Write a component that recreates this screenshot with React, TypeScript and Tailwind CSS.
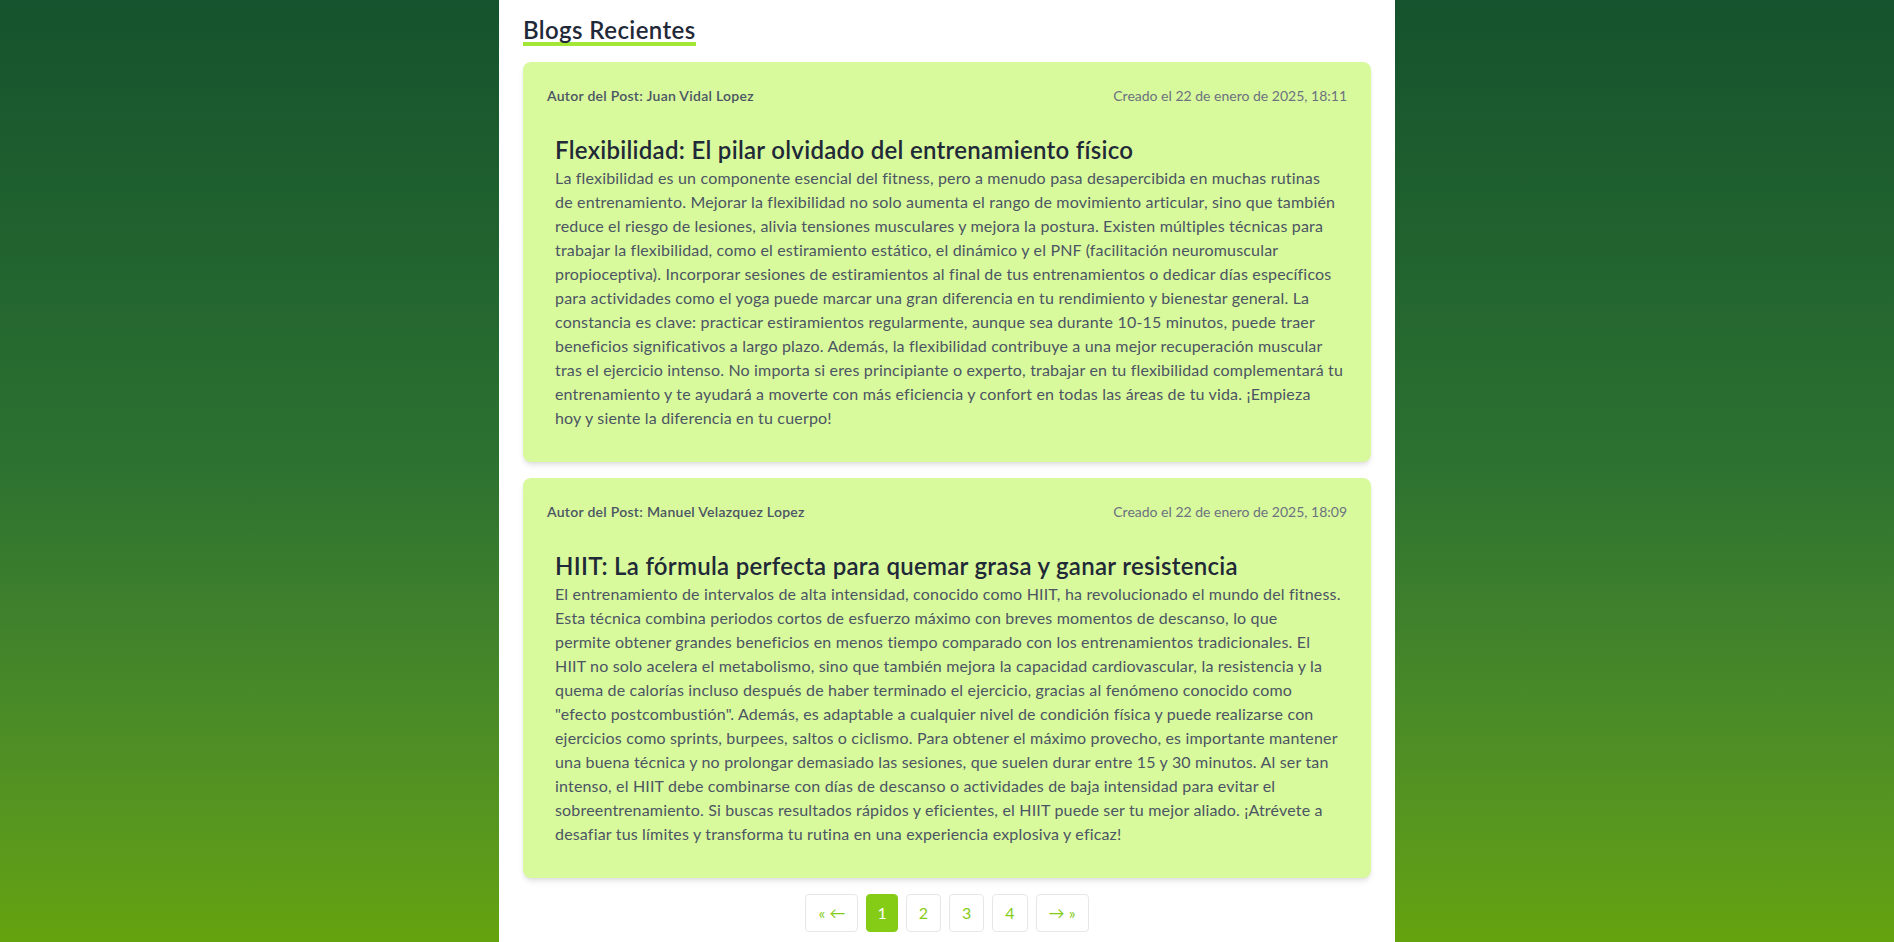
import React from "react";

type Post = {
  author: string;
  date: string;
  title: string;
  lines: string[];
};

const posts: Post[] = [
  {
    author: "Juan Vidal Lopez",
    date: "Creado el 22 de enero de 2025, 18:11",
    title: "Flexibilidad: El pilar olvidado del entrenamiento físico",
    lines: [
      "La flexibilidad es un componente esencial del fitness, pero a menudo pasa desapercibida en muchas rutinas",
      "de entrenamiento. Mejorar la flexibilidad no solo aumenta el rango de movimiento articular, sino que también",
      "reduce el riesgo de lesiones, alivia tensiones musculares y mejora la postura. Existen múltiples técnicas para",
      "trabajar la flexibilidad, como el estiramiento estático, el dinámico y el PNF (facilitación neuromuscular",
      "propioceptiva). Incorporar sesiones de estiramientos al final de tus entrenamientos o dedicar días específicos",
      "para actividades como el yoga puede marcar una gran diferencia en tu rendimiento y bienestar general. La",
      "constancia es clave: practicar estiramientos regularmente, aunque sea durante 10-15 minutos, puede traer",
      "beneficios significativos a largo plazo. Además, la flexibilidad contribuye a una mejor recuperación muscular",
      "tras el ejercicio intenso. No importa si eres principiante o experto, trabajar en tu flexibilidad complementará tu",
      "entrenamiento y te ayudará a moverte con más eficiencia y confort en todas las áreas de tu vida. ¡Empieza",
      "hoy y siente la diferencia en tu cuerpo!",
    ],
  },
  {
    author: "Manuel Velazquez Lopez",
    date: "Creado el 22 de enero de 2025, 18:09",
    title: "HIIT: La fórmula perfecta para quemar grasa y ganar resistencia",
    lines: [
      "El entrenamiento de intervalos de alta intensidad, conocido como HIIT, ha revolucionado el mundo del fitness.",
      "Esta técnica combina periodos cortos de esfuerzo máximo con breves momentos de descanso, lo que",
      "permite obtener grandes beneficios en menos tiempo comparado con los entrenamientos tradicionales. El",
      "HIIT no solo acelera el metabolismo, sino que también mejora la capacidad cardiovascular, la resistencia y la",
      "quema de calorías incluso después de haber terminado el ejercicio, gracias al fenómeno conocido como",
      "\"efecto postcombustión\". Además, es adaptable a cualquier nivel de condición física y puede realizarse con",
      "ejercicios como sprints, burpees, saltos o ciclismo. Para obtener el máximo provecho, es importante mantener",
      "una buena técnica y no prolongar demasiado las sesiones, que suelen durar entre 15 y 30 minutos. Al ser tan",
      "intenso, el HIIT debe combinarse con días de descanso o actividades de baja intensidad para evitar el",
      "sobreentrenamiento. Si buscas resultados rápidos y eficientes, el HIIT puede ser tu mejor aliado. ¡Atrévete a",
      "desafiar tus límites y transforma tu rutina en una experiencia explosiva y eficaz!",
    ],
  },
];

function Card({ post }: { post: Post }) {
  return (
    <div className="rounded-lg bg-[#d9f99d] p-6 shadow-md">
      <div className="flex items-center justify-between text-sm leading-5">
        <span className="font-semibold tracking-[0.02em] text-[#4b5563]">Autor del Post: {post.author}</span>
        <span className="text-[#6b7280]">{post.date}</span>
      </div>
      <div className="mt-5 p-2">
        <h3 className="text-2xl leading-8 font-semibold tracking-[0.012em] text-[#1f2937]">{post.title}</h3>
        <p className="text-base leading-6 tracking-[0.011em] text-[#4b5563]">
          {post.lines.map((l, i) => (
            <span key={i} className="block whitespace-nowrap">
              {l}
            </span>
          ))}
        </p>
      </div>
    </div>
  );
}

const btn = "rounded border border-[#e5e7eb] px-3 py-2 leading-5 text-[#84cc16]";

export default function App() {
  return (
    <div
      className="min-h-screen w-full bg-gradient-to-b from-[#14532d] via-[#2d7230] to-[#65a30d]"
      style={{ fontFamily: "Lato, 'Noto Sans', sans-serif" }}
    >
      <div className="mx-auto min-h-screen w-full max-w-[896px] bg-white px-6 pt-[18px] pb-2">
        <h2 className="mb-4 inline-block border-b-4 border-[#a3e635] text-2xl leading-6 font-semibold tracking-[0.017em] text-[#1f2937]">
          Blogs Recientes
        </h2>
        <div className="flex flex-col gap-4">
          {posts.map((p, i) => (
            <Card key={i} post={p} />
          ))}
        </div>
        <div className="mt-4 flex justify-center gap-2 text-base">
          <button className={btn}>« ←</button>
          <button className="rounded border border-[#84cc16] bg-[#84cc16] px-2.5 py-2 leading-5 text-white">1</button>
          <button className={btn}>2</button>
          <button className={btn}>3</button>
          <button className={btn}>4</button>
          <button className={btn}>→ »</button>
        </div>
      </div>
    </div>
  );
}
